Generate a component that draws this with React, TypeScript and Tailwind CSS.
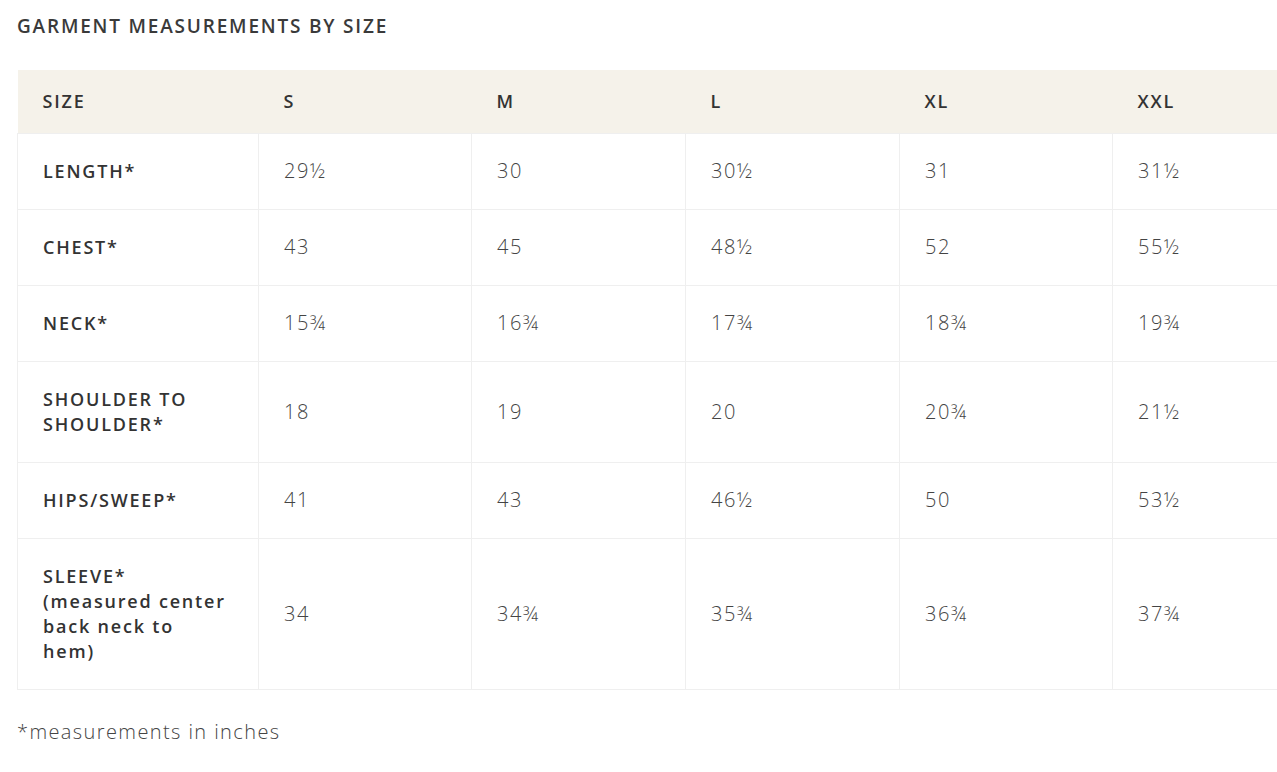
const sizes = ["S", "M", "L", "XL", "XXL"];
const colW = ["w-[213px]", "w-[214px]", "w-[214px]", "w-[213px]", "w-[213px]"];

const rows: { label: string[]; values: string[]; h: string }[] = [
  { label: ["LENGTH*"], values: ["29½", "30", "30½", "31", "31½"], h: "h-[76px]" },
  { label: ["CHEST*"], values: ["43", "45", "48½", "52", "55½"], h: "h-[76px]" },
  { label: ["NECK*"], values: ["15¾", "16¾", "17¾", "18¾", "19¾"], h: "h-[76px]" },
  { label: ["SHOULDER TO", "SHOULDER*"], values: ["18", "19", "20", "20¾", "21½"], h: "h-[101px]" },
  { label: ["HIPS/SWEEP*"], values: ["41", "43", "46½", "50", "53½"], h: "h-[76px]" },
  {
    label: ["SLEEVE*", "(measured center", "back neck to", "hem)"],
    values: ["34", "34¾", "35¾", "36¾", "37¾"],
    h: "h-[151px]",
  },
];

export default function App() {
  return (
    <div className="min-h-[772px] w-full overflow-hidden bg-white font-['Open_Sans',sans-serif] text-[#333]">
      <div className="pl-[17px] pt-[13px]">
        {/* Title */}
        <h2 className="text-[19px] font-semibold leading-[26px] tracking-[1.8px] text-[#3a3a3a]">
          GARMENT MEASUREMENTS BY SIZE
        </h2>

        {/* Table */}
        <table className="mt-[31px] w-[1308px] table-fixed border-collapse">
          <colgroup>
            <col className="w-[241px]" />
            {colW.map((w, i) => (
              <col key={i} className={w} />
            ))}
          </colgroup>
          <thead>
            <tr className="h-[63px] bg-[#f5f2ea]">
              <th className="pl-[25px] pr-[26px] text-left text-[18px] font-semibold tracking-[1.8px] text-[#333]">
                SIZE
              </th>
              {sizes.map((s) => (
                <th
                  key={s}
                  className="pl-[25px] pr-[26px] text-left text-[18px] font-semibold tracking-[1.8px] text-[#333]"
                >
                  {s}
                </th>
              ))}
            </tr>
          </thead>
          <tbody>
            {rows.map((r) => (
              <tr key={r.label[0]} className={r.h}>
                <td className="border border-[#efefef] pl-[25px] pr-[26px] text-[18px] font-semibold leading-[25px] tracking-[1.8px] text-[#333]">
                  {r.label.map((line) => (
                    <div key={line}>{line}</div>
                  ))}
                </td>
                {r.values.map((v, i) => (
                  <td
                    key={i}
                    className="border border-[#efefef] pl-[25px] pr-[26px] text-[20px] font-light tracking-[1.5px] text-[#444]"
                  >
                    {v}
                  </td>
                ))}
              </tr>
            ))}
          </tbody>
        </table>

        {/* Footnote */}
        <p className="mt-[27px] text-[20px] font-light tracking-[1.4px] text-[#444]">
          *measurements in inches
        </p>
      </div>
    </div>
  );
}
